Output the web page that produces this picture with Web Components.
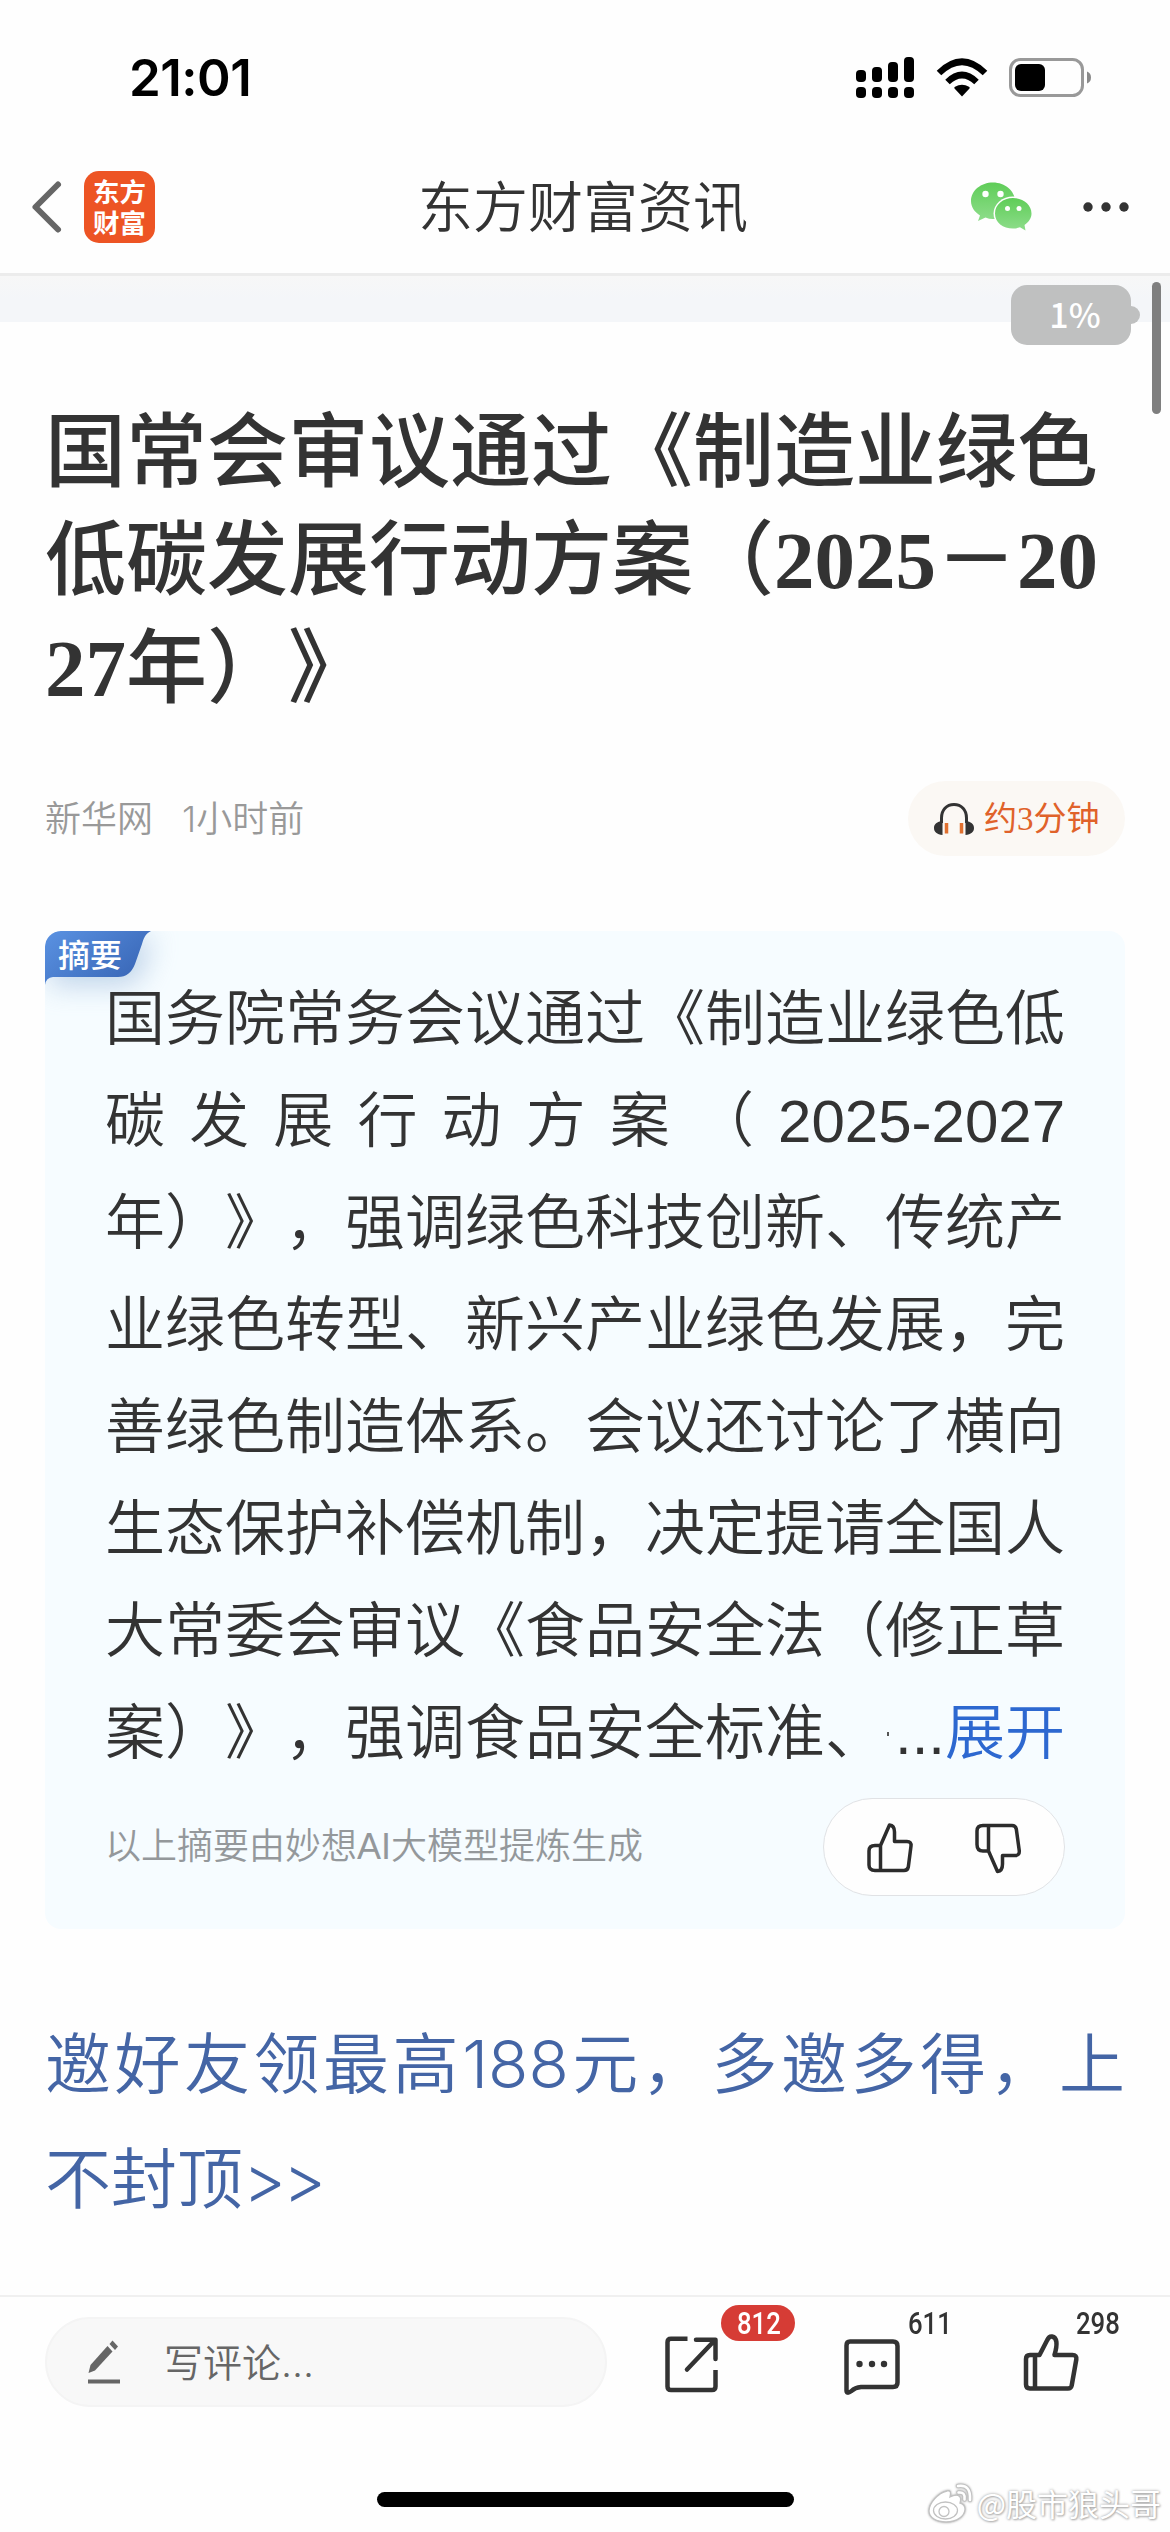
<!DOCTYPE html>
<html lang="zh-CN">
<head>
<meta charset="utf-8">
<title>东方财富资讯</title>
<style>
html, body {
  margin: 0;
  padding: 0;
  background: #fefefe;
}
body {
  width: 1170px;
  height: 2532px;
  overflow: hidden;
  color: #333;
  font-family: Inter, "Noto Sans CJK SC", sans-serif;
  text-spacing-trim: space-all;
}
news-title b { font-weight: 700; }
promo-link i { font-style: normal; letter-spacing: -3px; }
</style>
</head>
<body>
<news-page>
  <status-bar slot="top" time="21:01"></status-bar>
  <nav-bar slot="top">东方财富资讯</nav-bar>
  <read-progress slot="over">1%</read-progress>
  <news-title>
    <span>国常会审议通过《制造业绿色</span>
    <span>低碳发展行动方案（<b>2025</b>－<b>20</b></span>
    <span><b>27</b>年）》</span>
  </news-title>
  <news-meta source="新华网" time="1小时前">约3分钟</news-meta>
  <news-summary label="摘要" note="以上摘要由妙想AI大模型提炼生成">
    <span>国务院常务会议通过《制造业绿色低</span>
    <span>碳发展行动方案（2025-2027</span>
    <span>年）》，强调绿色科技创新、传统产</span>
    <span>业绿色转型、新兴产业绿色发展，完</span>
    <span>善绿色制造体系。会议还讨论了横向</span>
    <span>生态保护补偿机制，决定提请全国人</span>
    <span>大常委会审议《食品安全法（修正草</span>
    <span>案）》，强调食品安全标准、</span>
  </news-summary>
  <promo-link>
    <span>邀好友领最高188元，多邀多得，上</span>
    <span>不封顶<i>&gt;&gt;</i></span>
  </promo-link>
  <comment-bar slot="bottom" hint="写评论...">
    <count-icon icon="share" n="812" hot></count-icon>
    <count-icon icon="chat" n="611"></count-icon>
    <count-icon icon="like" n="298"></count-icon>
  </comment-bar>
  <water-mark slot="over">@股市狼头哥</water-mark>
</news-page>

<script>
"use strict";
//name: [width, height, content], drawn 1:1
const ICONS = {
  signal: [58, 41, `<g fill="#000">
    <rect x="0" y="13" width="10" height="12" rx="4"/><rect x="16" y="10" width="10" height="15" rx="4"/>
    <rect x="32" y="5" width="10" height="20" rx="4"/><rect x="48" y="0" width="10" height="25" rx="4"/>
    <rect x="0" y="30" width="10" height="11" rx="4"/><rect x="16" y="30" width="10" height="11" rx="4"/>
    <rect x="32" y="30" width="10" height="11" rx="4"/><rect x="48" y="30" width="10" height="11" rx="4"/></g>`],
  wifi: [52, 38, `<path d="M26 37.500L18.500 29.500Q17.800 28.500 19 27.800Q26 23.500 33 27.800Q34.200 28.500 33.500 29.500Z" fill="#000"/>
    <path d="M3 14Q26 -8.500 49 14" fill="none" stroke="#000" stroke-width="6.500"/>
    <path d="M11.500 23Q26 9 40.500 23" fill="none" stroke="#000" stroke-width="6.500"/>`],
  battery: [82, 39, `<rect x="1.500" y="1.500" width="72" height="36" rx="10" fill="none" stroke="#999" stroke-width="3"/>
    <rect x="6" y="6" width="30" height="27" rx="6" fill="#000"/>
    <path d="M78 13.500Q82 15 82 19.500T78 25.500Z" fill="#8a8a8a"/>`],
  back: [30, 52, `<path d="M26 3.500L3.500 26L26 48.500" fill="none" stroke="#666" stroke-width="6" stroke-linecap="round" stroke-linejoin="round"/>`],
  wechat: [62, 50, `<defs><linearGradient id="g" x1="0" y1="0" x2="0" y2="1"><stop offset="0" stop-color="#5fcd58"/><stop offset="1" stop-color="#8edd8b"/></linearGradient></defs>
    <path d="M22 .5C10 .5 0 8.500 0 19C0 25 3.500 30 9 33.500L7 39L14.500 35.500Q18 37 22 37C34 37 44 29 44 19S34 .5 22 .5Z" fill="url(#g)"/>
    <ellipse cx="42" cy="31.500" rx="19.500" ry="17" fill="#fefefe"/>
    <path d="M42 16C32 16 24 22.500 24 31.500S32 46.500 42 46.500Q46 46.500 49 45.300L54.500 48.500L53.500 43C58 40 60.500 36 60.500 31.500C60.500 22.500 52 16 42 16Z" fill="url(#g)"/>
    <g fill="#fff"><circle cx="14.500" cy="12" r="3.200"/><circle cx="29.500" cy="12" r="3.200"/><circle cx="36.500" cy="26.500" r="2.500"/><circle cx="48" cy="26.500" r="2.500"/></g>`],
  more: [46, 12, `<g fill="#333"><circle cx="5" cy="6" r="4.700"/><circle cx="23" cy="6" r="4.700"/><circle cx="41" cy="6" r="4.700"/></g>`],
  phones: [40, 32, `<path d="M7.500 20V15C7.500 7 12.500 1.500 20 1.500S32.500 7 32.500 15V20" fill="none" stroke="#333" stroke-width="3"/>
    <path d="M8.500 18V32C3 31.500 0 29 0 25S3 18.500 8.500 18ZM31.500 18V32C37 31.500 40 29 40 25S37 18.500 31.500 18Z" fill="#333"/>
    <path d="M12.500 20V30.500M27.500 20V30.500" stroke="#e0702f" stroke-width="3.500"/>`],
  up: [46, 48, `<path d="M13.500 22.500H8Q2 22.500 2 28V42Q2 47.500 8 47.500H37Q40.500 47.500 41.300 44L44 23Q44.500 18.500 40 18.500H27.500V9Q27.500 2.500 22.500 2L13.500 22.500V47.500"
    fill="none" stroke="#2c2c2c" stroke-width="3.500" stroke-linejoin="round"/>`],
  down: [46, 48, `<path d="M13.500 28H8Q2 28 2 21.500V8Q2 2.500 8 2.500H37Q40.500 2.500 41.300 6L44.300 28Q44.500 32.500 40 32.500H27.500V41Q27.500 48 22.500 48.500L13.500 28V2.500"
    fill="none" stroke="#2c2c2c" stroke-width="3.500" stroke-linejoin="round"/>`],
  pencil: [33, 44, `<g fill="#666"><path d="M.500 33L2.500 25L19.500 6L24.500 11.500L7 30.500Z"/><path d="M21.500 4L24.500 0.500L30 6.500L27 10Z"/>
    <rect x="0" y="39.500" width="32" height="4"/></g>`],
  share: [54, 54, `<g fill="none" stroke="#333" stroke-width="4.500" stroke-linejoin="round"><path d="M22.500 2.800H6Q2.500 2.800 2.500 6.300V50.500Q2.500 54 6 54H47Q50.500 54 50.500 50.500V34"/>
    <path d="M31 3.800H50.500V23M50 4L22 33.500" stroke-linecap="round"/></g>`],
  chat: [56, 54, `<path d="M6 2.500H49Q53.500 2.500 53.500 7V43.500Q53.500 48 49 48H17Q11 48.500 7.500 52Q2.500 55.500 2.500 51.500V6.500Q2.500 2.500 6 2.500Z" fill="none" stroke="#333" stroke-width="4.500"/>
    <g fill="#333"><circle cx="15.500" cy="25" r="3.200"/><circle cx="28" cy="25" r="3.200"/><circle cx="40" cy="25" r="3.200"/></g>`],
  like: [56, 57, `<path d="M12 21H7Q3 21 3 25V50.500Q3 54.500 7 54.500H45Q48 54.500 48.700 51.500L53.300 25.500Q54 21 49.500 21H31.500Q36.500 4 29 2.500Q26 2 24 6.500L16.500 21H12V54"
    fill="none" stroke="#333" stroke-width="4.500" stroke-linejoin="round"/>`],
  weibo: [46, 40, `<g fill="#fff" stroke="#c2c2c2" stroke-width="1.300">
    <path d="M19 8C10 10 1 20 1 28C1 35 9 39 18 39C29 39 37 33 37 26C37 22 34 20.500 32 20Q34 14 30 12.500Q27 11.500 22 14Q24 6.500 19 8Z"/>
    <ellipse cx="17.500" cy="27.500" rx="12" ry="8.500"/><circle cx="16" cy="28.500" r="5"/></g>
    <path d="M30 3Q43 1 42 17M30.500 9.500Q37.500 8.500 36.500 16.500" fill="none" stroke="#c2c2c2" stroke-width="4.500" stroke-linecap="round"/>
    <path d="M30 3Q43 1 42 17M30.500 9.500Q37.500 8.500 36.500 16.500" fill="none" stroke="#fff" stroke-width="2.500" stroke-linecap="round"/>`]
}
function icon(name) {
  let [w, h, s] = ICONS[name]
  return `<svg class="${name}" width="${w}" height="${h}" viewBox="0 0 ${w} ${h}">${s}</svg>`
}
//registers a tag; code(e) gives the shadow markup
function define(tag, code) {
  customElements.define(tag, class extends HTMLElement {
    constructor() {
      super()
      let sr = this.attachShadow({mode: 'open'})
      sr.innerHTML = '<style>svg { display: block; flex: none; overflow: visible }</style>'+code(this)
    }
  })
}

define('news-page', () => `<style>
:host {
  display: flex;
  flex-direction: column;
  position: relative;
  height: 2532px;
}
.band { height: 46px; background: linear-gradient(#f7f7f7, #f4f6f9 50%); }
main { flex: 1; padding: 77px 45px 0; }
</style>
<slot name=top></slot>
<div class=band></div>
<main><slot></slot></main>
<slot name=bottom></slot>
<slot name=over></slot>`)

define('status-bar', e => `<style>
:host {
  display: flex;
  align-items: center;
  height: 141px;
  box-sizing: border-box;
  padding: 14px 79px 0 129px;
  color: #000;
}
b { flex: 1; font-size: 51px; font-weight: 600; line-height: 60px; letter-spacing: -.500px; }
.wifi { margin: 0 21px 0 22px; }
</style>
<b>${e.getAttribute('time')}</b>
${icon('signal')}${icon('wifi')}${icon('battery')}`)

define('nav-bar', () => `<style>
:host {
  display: grid;
  grid-template-columns: 1fr auto 1fr;
  align-items: center;
  height: 132px;
  border-bottom: 3px solid #ececec;
  padding: 0 41px 0 32px;
}
.left, .right { display: flex; align-items: center; }
.right { justify-content: flex-end; gap: 50px; }
.logo {
  box-sizing: border-box;
  width: 71px;
  height: 72px;
  margin-left: 22px;
  padding: 4px 8px 0 9px;
  border-radius: 15px;
  background: #ed5424;
  color: #fff;
  font: bold 26.500px/31px "Noto Sans CJK SC", sans-serif;
}
h1 { margin: 0 -5px 0 0; font-size: 55px; font-weight: 350; line-height: 80px; }
</style>
<div class=left>${icon('back')}<div class=logo>东方财富</div></div>
<h1><slot></slot></h1>
<div class=right>${icon('wechat')}${icon('more')}</div>`)

define('read-progress', () => `<style>
:host {
  position: absolute;
  top: 282px;
  right: 9px;
  display: flex;
  align-items: flex-start;
}
.tip {
  position: relative;
  box-sizing: border-box;
  width: 120px;
  height: 60px;
  margin: 3px 21px 0 0;
  padding-left: 8px;
  border-radius: 16px;
  background: #bfc0c0;
  color: #fff;
  font: 500 34px/58px "Noto Sans CJK SC", sans-serif;
  text-align: center;
}
.tip::after {
  content: "";
  position: absolute;
  left: 120px;
  top: 21px;
  width: 9px;
  height: 18px;
  border-radius: 0 9px 9px 0;
  background: #bfc0c0;
}
.bar { width: 9px; height: 132px; border-radius: 5px; background: #7f7f7f; }
</style>
<div class=tip><slot></slot></div><div class=bar></div>`)

define('news-title', () => `<style>
:host {
  display: block;
  font: 500 81px/108px "Liberation Serif", "Noto Sans CJK SC", sans-serif;
}
::slotted(span) { display: block; white-space: nowrap; }
</style>
<slot></slot>`)

define('news-meta', e => `<style>
:host {
  display: flex;
  align-items: center;
  height: 75px;
  margin-top: 58px;
  color: #999;
  font-size: 36px;
  font-weight: 350;
}
span { margin-top: -5px; }
.time { flex: 1; margin-left: 29px; }
.listen {
  display: flex;
  align-items: center;
  gap: 10px;
  box-sizing: border-box;
  width: 217px;
  height: 75px;
  padding-left: 26px;
  border-radius: 38px;
  background: #fbf8f4;
  color: #e0622a;
  font: 33px/48px "Liberation Serif", "Noto Sans CJK SC", sans-serif;
}
.listen span { margin-top: 0; }
</style>
<span>${e.getAttribute('source')}</span>
<span class=time>${e.getAttribute('time')}</span>
<div class=listen>${icon('phones')}<span><slot></slot></span></div>`)

define('news-summary', e => `<style>
:host {
  display: block;
  position: relative;
  box-sizing: border-box;
  height: 998px;
  margin-top: 75px;
  padding: 38px 60px 0;
  border-radius: 16px;
  background: #f6fcff;
  overflow: hidden;
}
.tag {
  position: absolute;
  left: 0;
  top: 0;
  filter: drop-shadow(6px 8px 14px #7fa5d077);
}
.label {
  position: absolute;
  left: 13px;
  top: 0;
  color: #fff;
  font: 500 32px/44px "Noto Sans CJK SC", sans-serif;
}
.text {
  position: relative;
  font: 350 60px/102px "Liberation Sans", "Noto Sans CJK SC", sans-serif;
}
::slotted(span) { display: block; text-align: justify; text-align-last: justify; white-space: nowrap; }
::slotted(span:last-child) { text-align-last: left; }
/* lies over the end of the clamped last line */
.more { position: absolute; right: 0; bottom: 0; display: flex; align-items: center; }
.more i { width: 2px; height: 4px; margin-right: 6px; background: #555; }
.more b { color: #2d68d0; font-weight: inherit; }
.foot {
  display: flex;
  align-items: center;
  justify-content: space-between;
  margin-top: 13px;
  color: #94989b;
  font: 350 36px/54px "Liberation Sans", "Noto Sans CJK SC", sans-serif;
}
.vote {
  display: flex;
  justify-content: center;
  align-items: center;
  gap: 62px;
  box-sizing: border-box;
  width: 242px;
  height: 98px;
  border: 1px solid #e0e2e5;
  border-radius: 49px;
  background: #fefefe;
}
</style>
<svg class=tag width="106" height="54" viewBox="0 0 106 54">
<defs><linearGradient id=g x1="0" y1="0" x2="1" y2=".6"><stop offset="0" stop-color="#5a92e2"/><stop offset="1" stop-color="#3a68b8"/></linearGradient></defs>
<path d="M0 54V15Q0 0 16 0H106C100 3 98.500 8 97 13L90 33Q85 46 73 46H8Q1 46.500 0 54Z" fill="url(#g)"/></svg>
<div class=label>${e.getAttribute('label')}</div>
<div class=text><slot></slot><div class=more><i></i><span>...</span><b>展开</b></div></div>
<div class=foot><span>${e.getAttribute('note')}</span><div class=vote>${icon('up')}${icon('down')}</div></div>`)

define('promo-link', () => `<style>
:host {
  display: block;
  margin-top: 78px;
  color: #4465a5;
  font-size: 66px;
  font-weight: 350;
  line-height: 115px;
}
::slotted(span) { display: block; white-space: nowrap; text-align: justify; text-align-last: justify; }
::slotted(span:last-child) { text-align-last: left; }
</style>
<slot></slot>`)

define('comment-bar', e => `<style>
:host {
  display: flex;
  flex-direction: column;
  height: 237px;
  box-sizing: border-box;
  border-top: 2px solid #f0f0f0;
}
.row { display: flex; padding-left: 45px; height: 177px; }
.input {
  flex: none;
  display: flex;
  align-items: center;
  box-sizing: border-box;
  width: 562px;
  height: 90px;
  margin: 20px 58px 0 0;
  padding-left: 41px;
  border: 2px solid #f4f4f4;
  border-radius: 45px;
  background: #f8f8f8;
  color: #666;
  font-size: 39px;
  font-weight: 350;
}
.input span { margin: -4px 0 0 43px; }
.home { width: 417px; height: 15px; margin: 18px auto 0; border-radius: 8px; background: #000; }
</style>
<div class=row>
<div class=input>${icon('pencil')}<span>${e.getAttribute('hint')}</span></div>
<slot></slot></div>
<div class=home></div>`)

define('count-icon', e => `<style>
:host { display: block; flex: none; position: relative; width: 179px; padding-top: 39px; }
.chat { margin-top: 3px; }
.like { margin-top: -2px; }
.n {
  position: absolute;
  left: 64px;
  top: 8px;
  height: 36px;
  font: 500 31px/37px Roboto, sans-serif;
}
.n span { display: block; transform: scaleX(.83); transform-origin: 0 0; }
.like + .n { left: 53px; }
:host([hot]) .n {
  left: 56px;
  width: 58px;
  padding-left: 16px;
  border-radius: 18px;
  background: #d63c35;
  color: #fff;
}
</style>
${icon(e.getAttribute('icon'))}
<div class=n><span>${e.getAttribute('n')}</span></div>`)

define('water-mark', () => `<style>
:host {
  position: absolute;
  right: 9px;
  bottom: 7px;
  display: flex;
  align-items: center;
  gap: 3px;
  color: #fff;
  font: 31px/44px "Noto Sans CJK SC", sans-serif;
  text-shadow: 0 0 3px #999, 1px 1px 2px #bbb;
}
.weibo { filter: drop-shadow(0 0 1px #aaa); }
</style>
${icon('weibo')}<slot></slot>`)
</script>
</body>
</html>
